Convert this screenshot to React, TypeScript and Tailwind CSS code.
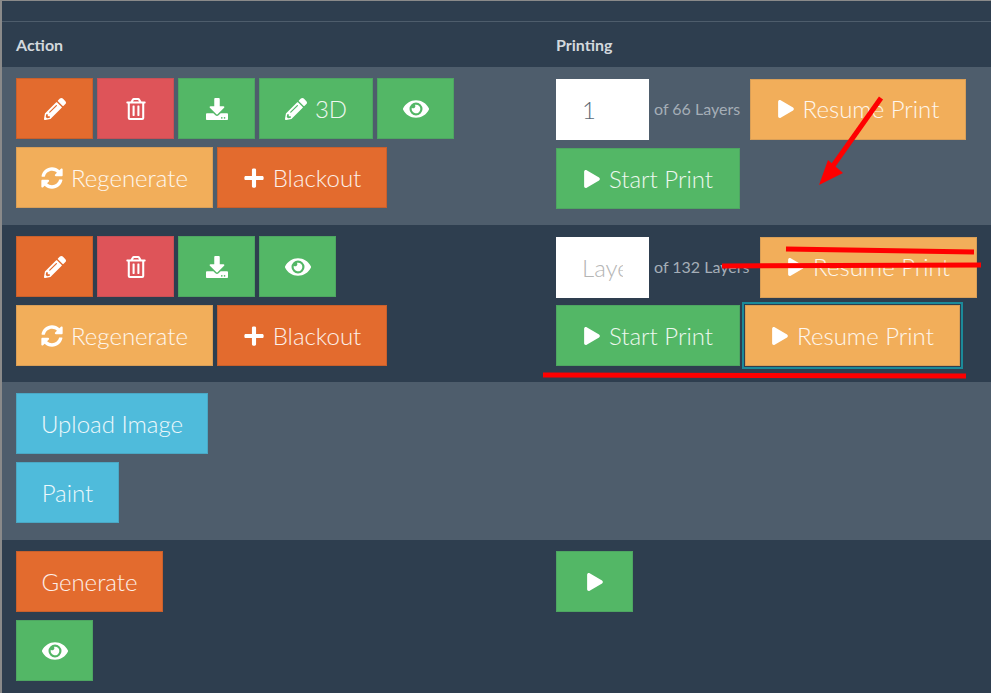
import type { ReactNode } from "react";
import { FaDownload, FaEye, FaPencilAlt, FaPlay, FaPlus, FaRegTrashAlt, FaSyncAlt } from "react-icons/fa";

function Btn({ className, children }: { className: string; children: ReactNode }) {
  return (
    <button
      type="button"
      className={
        "flex h-[61px] items-center justify-center gap-2 border text-[24px] font-light text-white/90 " +
        className
      }
    >
      {children}
    </button>
  );
}

const orange = "border-[#c9602c] bg-[#e36b2e]";
const red = "border-[#c85056] bg-[#de5459]";
const green = "border-[#4ea662] bg-[#53b766]";
const amber = "border-[#d99f58] bg-[#f2ae5a]";
const blue = "border-[#4aa8c5] bg-[#4fbbdb]";

function PrintCell({ label, width, placeholder, value }: { label: string; width: string; placeholder?: string; value?: string }) {
  return (
    <>
      <input
        readOnly
        value={value}
        placeholder={placeholder}
        className="mt-px h-[61px] w-[93px] bg-white pl-[26px] pr-[26px] text-[24px] font-light text-[#5b6875] outline-none placeholder:text-[#b5b5b5]"
      />
      <span className={"ml-[5px] whitespace-nowrap text-[16px] text-[#a5aeb7] " + width}>{label}</span>
    </>
  );
}

function RegenRow() {
  return (
    <div className="flex gap-1">
      <Btn className={amber + " w-[197px]"}>
        <FaSyncAlt className="size-[22px] text-white" />
        Regenerate
      </Btn>
      <Btn className={orange + " w-[170px]"}>
        <FaPlus className="size-[22px] text-white" />
        Blackout
      </Btn>
    </div>
  );
}

export default function App() {
  return (
    <div className="relative h-[693px] w-[991px] overflow-hidden border-l-2 border-t border-[#8a8a8a] bg-[#2e3e4f] font-['Lato',sans-serif]">
      <div className="h-[21px] border-b border-[#4e5d6c]" />
      <div className="grid h-[45px] grid-cols-[538px_1fr] items-center text-[16px] font-bold text-[#d3d8dd]">
        <div className="pl-[14px]">Action</div>
        <div className="pl-[16px]">Printing</div>
      </div>

      <div className="grid h-[158px] grid-cols-[538px_1fr] bg-[#4e5d6c] pt-[11px]">
        <div className="flex flex-col gap-2 pl-[14px]">
          <div className="flex gap-1">
            <Btn className={orange + " w-[77px]"}><FaPencilAlt className="size-[22px] text-white" /></Btn>
            <Btn className={red + " w-[77px]"}><FaRegTrashAlt className="size-[22px] text-white" /></Btn>
            <Btn className={green + " w-[77px]"}><FaDownload className="size-[22px] text-white" /></Btn>
            <Btn className={green + " w-[114px]"}><FaPencilAlt className="size-[22px] text-white" />3D</Btn>
            <Btn className={green + " w-[77px]"}><FaEye className="size-[26px] text-white" /></Btn>
          </div>
          <RegenRow />
        </div>
        <div className="flex flex-col gap-2 pl-[16px]">
          <div className="flex items-center">
            <PrintCell value="1" label="of 66 Layers" width="w-[96px]" />
            <Btn className={amber + " w-[216px]"}><FaPlay className="size-[18px] text-white" />Resume Print</Btn>
          </div>
          <Btn className={green + " w-[184px]"}><FaPlay className="size-[18px] text-white" />Start Print</Btn>
        </div>
      </div>

      <div className="grid h-[157px] grid-cols-[538px_1fr] pt-[11px]">
        <div className="flex flex-col gap-2 pl-[14px]">
          <div className="flex gap-1">
            <Btn className={orange + " w-[77px]"}><FaPencilAlt className="size-[22px] text-white" /></Btn>
            <Btn className={red + " w-[77px]"}><FaRegTrashAlt className="size-[22px] text-white" /></Btn>
            <Btn className={green + " w-[77px]"}><FaDownload className="size-[22px] text-white" /></Btn>
            <Btn className={green + " w-[77px]"}><FaEye className="size-[26px] text-white" /></Btn>
          </div>
          <RegenRow />
        </div>
        <div className="flex flex-col gap-[7px] pl-[16px]">
          <div className="flex items-center">
            <PrintCell placeholder="Layer" label="of 132 Layers" width="w-[106px]" />
            <Btn className={amber + " w-[217px]"}><FaPlay className="size-[18px] text-white" />Resume Print</Btn>
          </div>
          <div className="flex gap-[5px]">
            <Btn className={green + " w-[184px]"}><FaPlay className="size-[18px] text-white" />Start Print</Btn>
            <Btn className={amber + " w-[215px] outline-2 outline-offset-1 outline-[#1b8a9a]"}><FaPlay className="size-[18px] text-white" />Resume Print</Btn>
          </div>
        </div>
      </div>

      <div className="flex h-[158px] flex-col items-start gap-2 bg-[#4e5d6c] pl-[14px] pt-[11px]">
        <Btn className={blue + " w-[192px]"}>Upload Image</Btn>
        <Btn className={blue + " w-[103px]"}>Paint</Btn>
      </div>

      <div className="grid grid-cols-[538px_1fr] pt-[11px]">
        <div className="flex flex-col items-start gap-2 pl-[14px]">
          <Btn className={orange + " w-[147px]"}>Generate</Btn>
          <Btn className={green + " w-[77px]"}><FaEye className="size-[26px] text-white" /></Btn>
        </div>
        <div className="pl-[16px]">
          <Btn className={green + " w-[77px]"}><FaPlay className="size-[18px] text-white" /></Btn>
        </div>
      </div>

      {/* red markup drawn on top of the screenshot */}
      <svg className="absolute -left-[2px] -top-px" width="991" height="693" viewBox="0 0 991 693" fill="none">
        <path d="M881 98 L830 170" stroke="#f00" strokeWidth="5" />
        <path d="M819 185 L828 160 L843 173 Z" fill="#f00" />
        <path d="M786 249 L974 252" stroke="#f00" strokeWidth="5" />
        <path d="M722 266 L981 265" stroke="#f00" strokeWidth="5" />
        <path d="M543 375 L966 376" stroke="#f00" strokeWidth="5" />
      </svg>
    </div>
  );
}
